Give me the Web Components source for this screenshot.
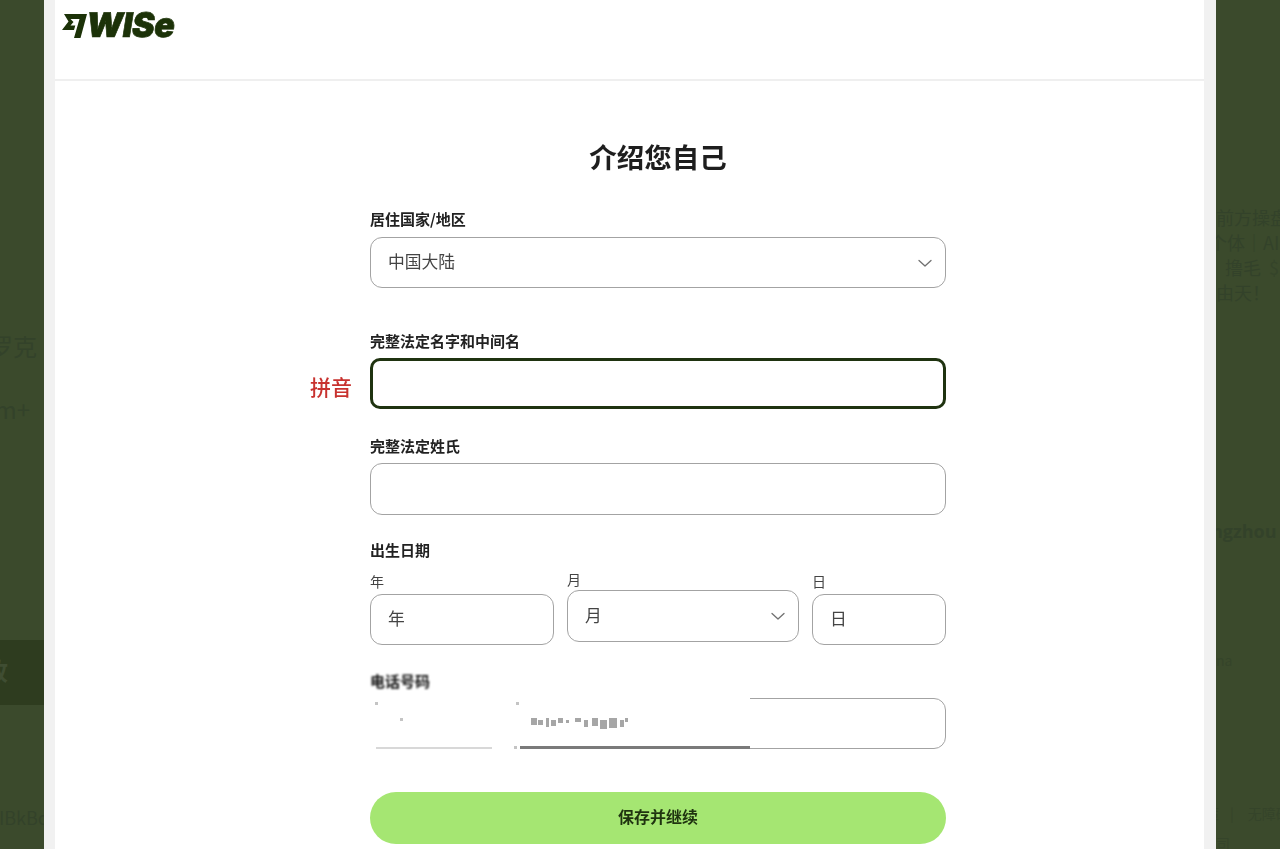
<!DOCTYPE html>
<html lang="zh">
<head>
<meta charset="utf-8">
<title>Wise</title>
<style>
  html, body { margin: 0; padding: 0; background: #3b4a2c; }
  body { font-family: "Noto Sans CJK SC", "Noto Sans", sans-serif; }
</style>
</head>
<body>
<wise-page>
  <wise-backdrop side="left" slot="left">
    <span style="margin-top:331px;margin-right:7px;font-size:24px;line-height:30px">罗克</span>
    <span style="margin-top:33px;margin-right:14px;font-size:24px;line-height:30px">m+</span>
    <wise-band>收</wise-band>
    <span style="margin-top:100px;align-self:flex-start;margin-left:-1px;font-size:18px;line-height:24px;color:#33422a">IBkBo</span>
  </wise-backdrop>

  <wise-modal>
    <wise-logo slot="header"></wise-logo>
    <h1 slot="title">介绍您自己</h1>

    <wise-field label="居住国家/地区" gap="8" style="margin-top:33px">
      <wise-box value="中国大陆" select></wise-box>
    </wise-field>

    <wise-field label="完整法定名字和中间名" style="margin-top:43px">
      <wise-box focused note="拼音" height="51"></wise-box>
    </wise-field>

    <wise-field label="完整法定姓氏" gap="7" style="margin-top:27px">
      <wise-box height="52"></wise-box>
    </wise-field>

    <wise-field label="出生日期" gap="1" style="margin-top:25px">
      <wise-date-row>
        <wise-date-part label="年" style="flex:0 0 184px;padding-top:12px">
          <wise-box value="年" height="51"></wise-box>
        </wise-date-part>
        <wise-date-part label="月" gap="3" style="flex:0 0 232px;padding-top:10px">
          <wise-box value="月" select height="52"></wise-box>
        </wise-date-part>
        <wise-date-part label="日" style="flex:0 0 134px;padding-top:12px">
          <wise-box value="日" height="51"></wise-box>
        </wise-date-part>
      </wise-date-row>
    </wise-field>

    <wise-phone style="margin-top:27px"></wise-phone>

    <wise-button style="margin-top:43px">保存并继续</wise-button>
  </wise-modal>

  <wise-backdrop side="right" slot="right">
    <span style="margin-top:205px;font-size:18px;line-height:25px">前方操盘</span>
    <span style="margin-left:-7px;font-size:18px;line-height:25px">个体｜AI</span>
    <span style="margin-left:9px;font-size:18px;line-height:25px">撸毛 <b style="font-weight:400;color:#35442a;margin-left:4px">$</b></span>
    <span style="font-size:18px;line-height:25px">由天！</span>
    <span style="margin-top:213px;margin-left:-5px;font:700 18px/26px 'Open Sans',sans-serif">ngzhou</span>
    <span style="margin-top:106px;font-size:14px;line-height:20px;color:#35442a">na</span>
    <span style="margin-top:133px;margin-left:-11px;font-size:14px;line-height:20px;color:#35442a">策<i style="font-style:normal;margin:0 14px 0 11px">|</i>无障碍</span>
    <span style="margin-top:10px;font-size:14px;line-height:20px;color:#35442a">司</span>
  </wise-backdrop>
</wise-page>

<script>
class WisePage extends HTMLElement {
  constructor() {
    super();
    this.attachShadow({ mode: 'open' });
    this.shadowRoot.innerHTML = `
      <style>
        :host {
          display: grid;
          grid-template-columns: 44px 1172px 64px;
          width: 1280px;
          height: 849px;
          overflow: hidden;
          background: #3b4a2c;
        }
      </style>
      <slot name="left"></slot>
      <slot></slot>
      <slot name="right"></slot>
    `;
  }
}

class WiseBackdrop extends HTMLElement {
  constructor() {
    super();
    this.attachShadow({ mode: 'open' });
    const right = this.getAttribute('side') === 'right';
    this.shadowRoot.innerHTML = `
      <style>
        :host {
          display: flex;
          flex-direction: column;
          align-items: ${right ? 'flex-start' : 'flex-end'};
          height: 849px;
          overflow: hidden;
          color: #33422a;
          white-space: nowrap;
        }
        ::slotted(span) { display: block; flex: none; }
      </style>
      <slot></slot>
    `;
  }
}

class WiseBand extends HTMLElement {
  constructor() {
    super();
    this.attachShadow({ mode: 'open' });
    this.shadowRoot.innerHTML = `
      <style>
        :host {
          display: flex;
          align-items: center;
          justify-content: flex-end;
          align-self: stretch;
          flex: none;
          box-sizing: border-box;
          height: 65px;
          margin-top: 216px;
          padding: 0 36px 6px 0;
          background: #2e3c1f;
          color: #3f4d32;
          font-size: 24px;
          font-weight: 700;
        }
      </style>
      <slot></slot>
    `;
  }
}

class WiseModal extends HTMLElement {
  constructor() {
    super();
    this.attachShadow({ mode: 'open' });
    this.shadowRoot.innerHTML = `
      <style>
        :host {
          display: block;
          height: 849px;
          padding: 0 12px 0 11px;
          background: #f1f1f1;
          overflow: hidden;
          box-sizing: border-box;
        }
        .sheet { height: 100%; background: #fff; filter: blur(0.35px); }
        header {
          box-sizing: border-box;
          height: 81px;
          border-bottom: 2px solid #efefef;
          padding: 8px 0 0 7px;
        }
        main {
          width: 576px;
          margin-left: 315px;
          padding-top: 55px;
        }
        ::slotted(h1) {
          margin: 0;
          font-size: 27.5px;
          line-height: 40px;
          font-weight: 700;
          text-align: center;
          color: #1e1e1e;
        }
      </style>
      <div class="sheet">
        <header><slot name="header"></slot></header>
        <main>
          <slot name="title"></slot>
          <slot></slot>
        </main>
      </div>
    `;
  }
}

class WiseLogo extends HTMLElement {
  constructor() {
    super();
    this.attachShadow({ mode: 'open' });
    this.shadowRoot.innerHTML = `
      <style>
        :host { display: flex; align-items: center; gap: 0; height: 34px; color: #1c3208; }
        svg { width: 25px; height: 24px; flex: none; margin-top: 2px; }
        span {
          display: block;
          font: 900 34px/34px Inter, "Liberation Sans", sans-serif;
          letter-spacing: -0.6px;
          -webkit-text-stroke: 0.7px currentColor;
          transform: skewX(-9deg);
          margin-top: -1px;
        }
      </style>
      <svg viewBox="0 0 25 24" fill="currentColor"><path d="M6.500 7.500 0 16h12l1.300-4.500H8.500l3-3.500-3-3h9L12 24h6.500L25 0H2z"/></svg>
      <span>WISe</span>
    `;
  }
}

class WiseField extends HTMLElement {
  constructor() {
    super();
    this.attachShadow({ mode: 'open' });
    const gap = this.getAttribute('gap') || '7';
    this.shadowRoot.innerHTML = `
      <style>
        :host { display: block; }
        label {
          display: block;
          font-size: 15px;
          line-height: 20px;
          font-weight: 700;
          color: #222;
          margin-bottom: ${gap}px;
        }
      </style>
      <label>${this.getAttribute('label')}</label>
      <slot></slot>
    `;
  }
}

class WiseBox extends HTMLElement {
  constructor() {
    super();
    this.attachShadow({ mode: 'open' });
    const focused = this.hasAttribute('focused');
    const h = this.getAttribute('height') || '51';
    const note = this.getAttribute('note');
    const chevron = this.hasAttribute('select')
      ? `<svg viewBox="0 0 14 14" fill="none" stroke="#707070" stroke-width="1.300" stroke-linecap="round" stroke-linejoin="round"><path d="M1 4.500 7 10l6-5.500"/></svg>`
      : '';
    this.shadowRoot.innerHTML = `
      <style>
        :host { display: block; position: relative; }
        .box {
          display: flex;
          align-items: center;
          justify-content: space-between;
          box-sizing: border-box;
          height: ${h}px;
          padding: 0 13px 3px 17px;
          border: ${focused ? '3px solid #1f3310' : '1.500px solid #a3a3a3'};
          border-radius: ${focused ? '10px' : '12px'};
          background: #fff;
          font-size: 16.750px;
          color: #444;
        }
        svg { width: 14px; height: 14px; flex: none; margin-top: 3px; }
        .note {
          position: absolute;
          right: calc(100% + 18px);
          top: 13px;
          font-size: 21px;
          font-weight: 500;
          line-height: 30px;
          color: #c8322f;
          white-space: nowrap;
        }
      </style>
      ${note ? `<span class="note">${note}</span>` : ''}
      <div class="box"><span>${this.getAttribute('value') || ''}</span>${chevron}</div>
    `;
  }
}

class WiseDateRow extends HTMLElement {
  constructor() {
    super();
    this.attachShadow({ mode: 'open' });
    this.shadowRoot.innerHTML = `
      <style>
        :host { display: flex; justify-content: space-between; align-items: flex-start; height: 83px; }
      </style>
      <slot></slot>
    `;
  }
}

class WiseDatePart extends HTMLElement {
  constructor() {
    super();
    this.attachShadow({ mode: 'open' });
    const gap = this.getAttribute('gap') || '5';
    this.shadowRoot.innerHTML = `
      <style>
        :host { display: block; box-sizing: border-box; }
        label {
          display: block;
          font-size: 14px;
          line-height: 16px;
          margin-bottom: ${gap}px;
          color: #444;
        }
      </style>
      <label>${this.getAttribute('label')}</label>
      <slot></slot>
    `;
  }
}

class WisePhone extends HTMLElement {
  constructor() {
    super();
    this.attachShadow({ mode: 'open' });
    // the phone number is pixelated and painted over in the source picture
    const blocks = [[531,6,7],[538,5,5],[546,3,9],[551,5,6],[558,5,5],[566,3,3],[575,6,4],[584,4,7],[592,6,8],[600,7,9],[609,8,10],[620,4,7],[625,3,4]];
    const rects = blocks.map(([x, w, h], i) =>
      `<rect x="${x - 370}" y="${i % 2 ? 22 : 20}" width="${w}" height="${h}" fill="#a6a6a6"/>`).join('');
    const specks = [[5,4],[30,20],[146,4],[144,48]].map(([x, y]) =>
      `<rect x="${x}" y="${y}" width="3" height="3" fill="#c4c4c4"/>`).join('');
    this.shadowRoot.innerHTML = `
      <style>
        :host { display: block; position: relative; }
        label {
          display: block;
          font-size: 15px;
          line-height: 20px;
          font-weight: 700;
          color: #111;
          margin-bottom: 7px;
          filter: blur(0.8px);
        }
        .box {
          box-sizing: border-box;
          height: 51px;
          border: 1.500px solid #a3a3a3;
          border-radius: 12px;
          background: #fff;
        }
        .patch {
          position: absolute;
          left: -4px;
          top: 23px;
          width: 384px;
          height: 58px;
          background: #fff;
        }
        svg { position: absolute; left: 0; top: 27px; width: 380px; height: 51px; filter: blur(0.6px); }
      </style>
      <label>电话号码</label>
      <div class="box"></div>
      <div class="patch"></div>
      <svg viewBox="0 0 380 51">
        ${rects}
        ${specks}
        <rect x="150" y="48" width="230" height="3" fill="#7a7a7a"/>
        <rect x="6" y="49" width="116" height="2" fill="#d8d8d8"/>
      </svg>
    `;
  }
}

class WiseButton extends HTMLElement {
  constructor() {
    super();
    this.attachShadow({ mode: 'open' });
    this.shadowRoot.innerHTML = `
      <style>
        :host {
          display: flex;
          align-items: center;
          justify-content: center;
          box-sizing: border-box;
          height: 52px;
          padding-bottom: 4px;
          border-radius: 26px;
          background: #a5e672;
          color: #1f3310;
          font-size: 16px;
          font-weight: 700;
        }
      </style>
      <slot></slot>
    `;
  }
}

customElements.define('wise-page', WisePage);
customElements.define('wise-backdrop', WiseBackdrop);
customElements.define('wise-band', WiseBand);
customElements.define('wise-modal', WiseModal);
customElements.define('wise-logo', WiseLogo);
customElements.define('wise-field', WiseField);
customElements.define('wise-box', WiseBox);
customElements.define('wise-date-row', WiseDateRow);
customElements.define('wise-date-part', WiseDatePart);
customElements.define('wise-phone', WisePhone);
customElements.define('wise-button', WiseButton);
</script>
</body>
</html>
